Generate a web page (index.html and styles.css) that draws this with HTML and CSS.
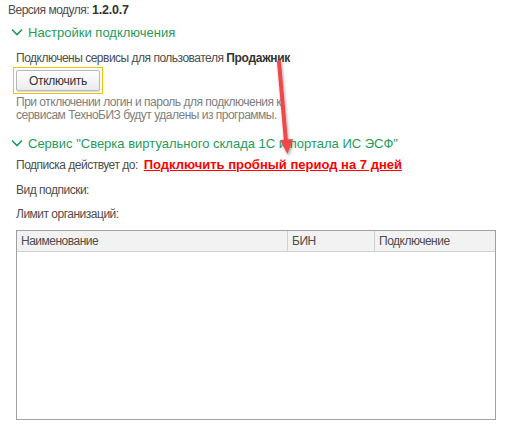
FILE: index.html
```html
<!DOCTYPE html>
<html lang="ru">
<head>
<meta charset="utf-8">
<link rel="stylesheet" href="styles.css">
</head>
<body>
<div class="page">
  <div class="version"><span class="ver-label">Версия модуля:</span> <span class="ver-num">1.2.0.7</span></div>

  <div class="group-title">
    <svg class="chev" width="12" height="8" viewBox="0 0 12 8"><path d="M1 1.5 L6 6.5 L11 1.5" fill="none" stroke="#1f9c5c" stroke-width="1.6"/></svg>
    <span>Настройки подключения</span>
  </div>
  <div class="section">
    <div class="line user">Подключены сервисы для пользователя <b>Продажник</b></div>
    <div class="btn-wrap"><button class="btn">Отключить</button></div>
    <div class="hint">При отключении логин и пароль для подключения к<br>сервисам ТехноБИЗ будут удалены из программы.</div>
  </div>

  <div class="group-title g2">
    <svg class="chev" width="12" height="8" viewBox="0 0 12 8"><path d="M1 1.5 L6 6.5 L11 1.5" fill="none" stroke="#1f9c5c" stroke-width="1.6"/></svg>
    <span>Сервис "Сверка виртуального склада 1С и портала ИС ЭСФ"</span>
  </div>
  <div class="section">
    <div class="line sub"><span>Подписка действует до:</span><a class="trial" href="#">Подключить пробный период на 7 дней</a></div>
    <div class="line kind">Вид подписки:</div>
    <div class="line limit">Лимит организаций:</div>
    <div class="table">
      <div class="thead">
        <div class="th c1">Наименование</div>
        <div class="th c2">БИН</div>
        <div class="th c3">Подключение</div>
      </div>
      <div class="tbody"></div>
    </div>
  </div>

  <svg class="arrow" width="40" height="110" viewBox="0 0 40 110">
    <defs>
      <filter id="sh" x="-50%" y="-20%" width="200%" height="140%">
        <feDropShadow dx="1" dy="2" stdDeviation="1.5" flood-color="#000" flood-opacity="0.35"/>
      </filter>
    </defs>
    <g filter="url(#sh)">
      <line x1="9" y1="4" x2="16" y2="84" stroke="#f0474a" stroke-width="4" stroke-linecap="round"/>
      <polygon points="10,82 23,81 17.5,96" fill="#f0474a"/>
    </g>
  </svg>
</div>
</body>
</html>
```

FILE: styles.css
```css
html, body {
  margin: 0;
  padding: 0;
  background: #fff;
}
.page {
  position: relative;
  width: 511px;
  height: 442px;
  font-family: "Liberation Sans", Arial, sans-serif;
  font-size: 12px;
  letter-spacing: -0.5px;
  color: #4d4d4d;
}
.version {
  padding: 2px 0 0 8px;
  height: 16px;
  line-height: 16px;
}
.ver-label {
  color: #4d4d4d;
}
.ver-num {
  font-weight: bold;
  font-size: 12.5px;
  letter-spacing: -0.2px;
  color: #333;
}
.group-title {
  display: flex;
  align-items: center;
  gap: 5px;
  padding-left: 11px;
  margin-top: 5px;
  height: 18px;
  font-size: 13px;
  letter-spacing: 0;
  color: #1f9c5c;
}
.group-title.g2 {
  margin-top: 12px;
}
.chev {
  flex: none;
}
.section {
  padding-left: 16px;
}
.line {
  line-height: 14px;
}
.user {
  margin-top: 10px;
}
.user b {
  color: #333;
  letter-spacing: -0.3px;
}
.btn-wrap {
  display: inline-block;
  margin: 2px 0 0 -3px;
  border: 1px solid #f2c500;
  padding: 2px;
}
.btn {
  display: block;
  width: 84px;
  height: 21px;
  border: 1px solid #b8b8b8;
  border-radius: 2px;
  background: linear-gradient(#ffffff, #ececec);
  box-shadow: 0 1px 1px rgba(0,0,0,0.15);
  font-family: "Liberation Sans", Arial, sans-serif;
  font-size: 12px;
  letter-spacing: -0.3px;
  color: #333;
  padding: 0;
}
.hint {
  margin-top: 2px;
  line-height: 13px;
  font-size: 12px;
  color: #808080;
}
.sub {
  margin-top: 6px;
  display: flex;
  gap: 6px;
  align-items: baseline;
}
.trial {
  color: #ff0000;
  font-weight: bold;
  font-size: 13px;
  letter-spacing: 0;
  line-height: 14px;
  text-decoration: underline;
}
.kind {
  margin-top: 11px;
}
.limit {
  margin-top: 10px;
}
.table {
  margin-top: 9px;
  width: 478px;
  height: 188px;
  border: 1px solid #a0a0a0;
  display: flex;
  flex-direction: column;
}
.thead {
  display: grid;
  grid-template-columns: 270px 87px 1fr;
  height: 20px;
  background: #f2f2f2;
  border-bottom: 1px solid #d0d0d0;
}
.th {
  line-height: 20px;
  padding-left: 4px;
  color: #4d4d4d;
}
.c2, .c3 {
  border-left: 1px solid #d0d0d0;
}
.tbody {
  flex: 1;
}
.arrow {
  position: absolute;
  left: 270px;
  top: 58px;
}
```
